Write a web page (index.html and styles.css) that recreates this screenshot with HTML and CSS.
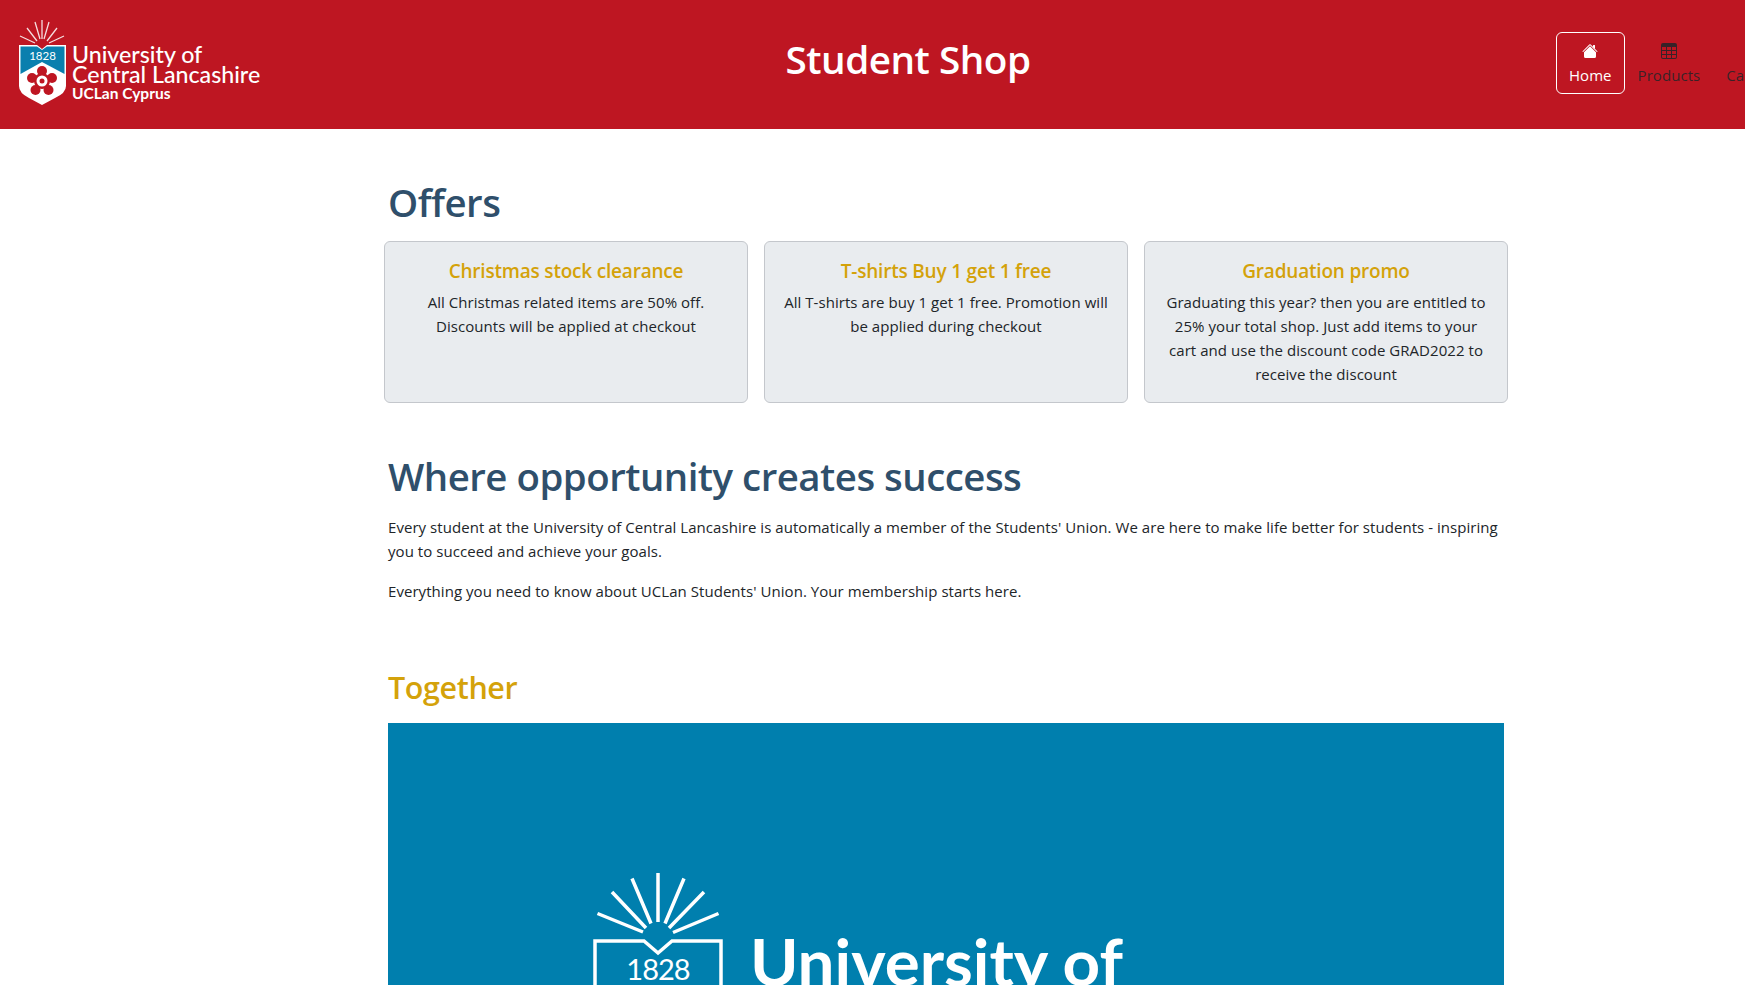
FILE: index.html
```html
<!DOCTYPE html>
<html lang="en">
<head>
<meta charset="utf-8">
<title>Student Shop</title>
<link rel="stylesheet" href="styles.css">
</head>
<body>
<div class="page">
  <header class="site-header">
    <a class="brand" href="#">
      <svg class="brand-logo" viewBox="0 0 260 129" width="260" height="129" aria-label="University of Central Lancashire, UCLan Cyprus">
        <path class="rays" d="M42 20V39M35 22L40 39M49 22L44 39M27 28L37 41M57 28L47 41M20 36L35 43M64 36L49 43"/>
        <path class="shield-white" d="M19 45H37L42 49L47 45H66V86Q66 93 55 98L42 105L29 98Q19 93 19 86Z"/>
        <path class="shield-blue" d="M20.500 46.500H37L42 50L47 46.500H64.500V74L42 62L20.500 74Z"/>
        <text class="shield-year" x="42.500" y="60" text-anchor="middle">1828</text>
        <g class="rose">
          <circle cx="42" cy="71" r="5"/><circle cx="32" cy="78" r="5"/><circle cx="52" cy="78" r="5"/><circle cx="35.500" cy="90" r="5"/><circle cx="48.500" cy="90" r="5"/>
          <circle cx="42" cy="81" r="8"/>
        </g>
        <circle class="rose-ring" cx="42" cy="81" r="5.500"/>
        <circle class="rose-heart" cx="42" cy="81" r="2.500"/>
        <text class="logo-line" x="72" y="63">University of</text>
        <text class="logo-line" x="72" y="83">Central Lancashire</text>
        <text class="logo-sub" x="72" y="99">UCLan Cyprus</text>
      </svg>
    </a>
    <h1 class="site-title">Student Shop</h1>
    <nav class="site-nav">
      <a class="nav-link is-active" href="#">
        <svg class="nav-icon" viewBox="0 0 16 16" width="16" height="16"><path d="M8 3.293l6 6V13.500a1.500 1.500 0 0 1-1.500 1.500h-9A1.500 1.500 0 0 1 2 13.500V9.293l6-6zm5-.793V6l-2-2V2.500a.5.5 0 0 1 .5-.5h1a.5.5 0 0 1 .5.5z"/><path d="M7.293 1.500a1 1 0 0 1 1.414 0l6.647 6.646a.5.5 0 0 1-.708.708L8 2.207 1.354 8.854a.5.5 0 1 1-.708-.708L7.293 1.500z"/></svg>
        <span>Home</span>
      </a>
      <a class="nav-link" href="#">
        <svg class="nav-icon" viewBox="0 0 16 16" width="16" height="16"><path d="M0 2a2 2 0 0 1 2-2h12a2 2 0 0 1 2 2v12a2 2 0 0 1-2 2H2a2 2 0 0 1-2-2V2zm15 2h-4v3h4V4zm0 4h-4v3h4V8zm0 4h-4v3h3a1 1 0 0 0 1-1v-2zm-5 3v-3H6v3h4zm-5 0v-3H1v2a1 1 0 0 0 1 1h3zm-4-4h4V8H1v3zm0-4h4V4H1v3zm5-3v3h4V4H6zm4 4H6v3h4V8z"/></svg>
        <span>Products</span>
      </a>
      <a class="nav-link nav-link-plain" href="#">
        <span>Cart</span>
      </a>
    </nav>
  </header>

  <main class="container">
    <h1 class="heading">Offers</h1>
    <section class="offers">
      <article class="offer">
        <h5 class="offer-title">Christmas stock clearance</h5>
        <p class="offer-text">All Christmas related items are 50% off. Discounts will be applied at checkout</p>
      </article>
      <article class="offer">
        <h5 class="offer-title">T-shirts Buy 1 get 1 free</h5>
        <p class="offer-text">All T-shirts are buy 1 get 1 free. Promotion will be applied during checkout</p>
      </article>
      <article class="offer">
        <h5 class="offer-title">Graduation promo</h5>
        <p class="offer-text">Graduating this year? then you are entitled to 25% your total shop. Just add items to your cart and use the discount code GRAD2022 to receive the discount</p>
      </article>
    </section>

    <h1 class="heading">Where opportunity creates success</h1>
    <p class="copy">Every student at the University of Central Lancashire is automatically a member of the Students' Union. We are here to make life better for students - inspiring you to succeed and achieve your goals.</p>
    <p class="copy">Everything you need to know about UCLan Students' Union. Your membership starts here.</p>

    <h2 class="subheading">Together</h2>
    <div class="banner">
      <svg class="banner-logo" viewBox="0 0 1116 262" width="1116" height="262" aria-label="University of">
        <path class="banner-rays" d="M270 150V199M244 155.500L263 200.500M296 155.500L277 200.500M224 169L258 205M316 169L281 205M209.500 190.500L255 209M330.500 190.500L285 209.500"/>
        <path class="banner-rays" d="M207 262V218H256L270 230L284 218H333V262"/>
        <text class="banner-year" x="270" y="257" text-anchor="middle">1828</text>
        <text class="banner-name" x="362" y="263">University of</text>
      </svg>
    </div>
  </main>
</div>
</body>
</html>
```
FILE: styles.css
```css
* { box-sizing: border-box; }
html, body { margin: 0; padding: 0; overflow: hidden; height: 100%; }
body {
  font-family: "Open Sans", "Noto Sans", sans-serif;
  font-size: 15px;
  line-height: 24px;
  letter-spacing: 0.05px;
  color: #212529;
  background: #fff;
}
.page { width: 1892px; }
.site-header {
  display: flex;
  align-items: center;
  height: 129px;
  background: #be1622;
}
.brand { display: block; flex: none; height: 129px; }
.brand-logo { display: block; }
.rays { stroke: #fff; stroke-width: 1.300; fill: none; opacity: .85; }
.shield-white { fill: #fff; }
.shield-blue { fill: #0a7fae; }
.shield-year { font: 11.500px "Lato", sans-serif; fill: #fff; letter-spacing: 0; }
.rose circle { fill: #be1622; }
.rose-ring { fill: #fff; }
.rose-heart { fill: #be1622; }
.logo-line { font: 500 23.200px "Lato", sans-serif; fill: #fff; letter-spacing: 0; }
.logo-sub { font: 700 15.500px "Lato", sans-serif; fill: #fff; letter-spacing: 0; }
.site-title {
  flex: 1;
  margin: 0 0 11px;
  text-align: center;
  color: #fff;
  font-size: 38.700px;
  line-height: 48px;
  font-weight: 600;
  letter-spacing: -0.5px;
}
.site-nav { display: flex; flex: none; width: 336px; margin-top: -4px; }
.nav-link {
  display: flex;
  flex-direction: column;
  align-items: center;
  gap: 4px;
  padding: 10px 12px 6px;
  border: 1px solid transparent;
  border-radius: 6px;
  color: rgba(33, 37, 41, .85);
  text-decoration: none;
}
.nav-link-plain { justify-content: flex-end; }
.nav-link.is-active { color: #fff; border-color: #fff; }
.nav-icon { display: block; fill: currentColor; }
.container { width: 1140px; margin: 0 auto; padding: 0 12px; }
.heading {
  margin: 49px 0 15px;
  font-size: 38.400px;
  line-height: 48px;
  font-weight: 600;
  letter-spacing: -0.5px;
  color: #2f4f6b;
}
.offers { display: flex; gap: 16px; margin: 0 -4px; }
.offer {
  flex: 1;
  height: 162px;
  padding: 16px;
  border: 1px solid #c4c7cc;
  border-radius: 6px;
  background: #e9ecef;
  text-align: center;
}
.offer-title {
  margin: 0 0 6px;
  font-size: 19px;
  line-height: 26px;
  font-weight: 600;
  letter-spacing: -0.2px;
  color: #d4a20a;
}
.offer-text { margin: 0; }
.copy { margin: 0 0 16px; }
.subheading {
  margin: 65px 0 17px;
  font-size: 30.500px;
  line-height: 38px;
  font-weight: 600;
  letter-spacing: -0.4px;
  color: #d4a20a;
}
.banner { height: 360px; background: #007fae; width: 1116px; overflow: hidden; }
.banner-logo { display: block; overflow: visible; }
.banner-rays { stroke: #fff; stroke-width: 3.500; fill: none; }
.banner-year { font: 29px "Lato", sans-serif; fill: #fff; letter-spacing: -1px; }
.banner-name { font: 700 65.500px "Lato", sans-serif; fill: #fff; letter-spacing: 0; }
```
